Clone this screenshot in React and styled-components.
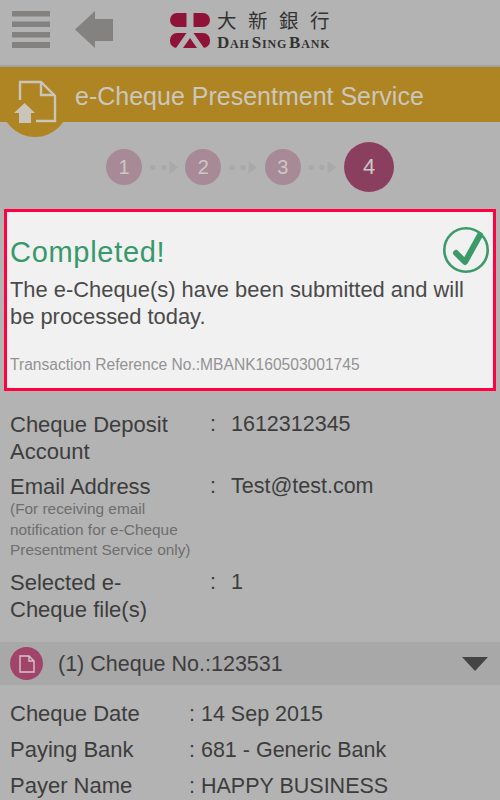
import React from 'react';
import styled, { createGlobalStyle } from 'styled-components';

const GlobalStyle = createGlobalStyle`
  html, body {
    margin: 0;
    padding: 0;
    background: #b3b3b3;
    font-family: "Liberation Sans", Arial, sans-serif;
  }
`;

const details = [
  { label: 'Cheque Date', value: '14 Sep 2015' },
  { label: 'Paying Bank', value: '681 - Generic Bank' },
  { label: 'Payer Name', value: 'HAPPY BUSINESS' },
];

const App = () => (
  <Page>
    <GlobalStyle />
    <Header>
      <IconButton aria-label="menu">
        <svg width="38" height="37" viewBox="0 0 38 37">
          <path d="M0 0h38v5.5H0zM0 10.5h38V16H0zM0 21h38v5.5H0zM0 31h38v6H0z" fill="#848181" />
        </svg>
      </IconButton>
      <BackIcon width="38" height="37" viewBox="0 0 38 37">
        <path d="M0 18.5 20 0v8h18v22H20v7z" fill="#848181" />
      </BackIcon>
      <Logo>
        <LogoMark width="40" height="35" viewBox="0 0 40 35">
          <rect x="0" y="0" width="40" height="14" rx="7" fill="#8f1238" />
          <rect x="0" y="20" width="40" height="15" rx="7" fill="#8f1238" />
          <path d="M16.5 0H23.5V20L34 35H27L20 25 13 35H6L16.5 20z" fill="#b3b3b3" />
        </LogoMark>
        <LogoText>
          <LogoChinese>大新銀行</LogoChinese>
          <LogoLatin>Dah Sing Bank</LogoLatin>
        </LogoText>
      </Logo>
    </Header>

    <TitleBar>
      <TitleBadge>
        <svg width="44" height="44" viewBox="0 0 44 44">
          <path d="M6 20V2h21l14 14v25H22" fill="none" stroke="#c9c5bb" strokeWidth="2.4" />
          <path d="M27 2v13h14" fill="none" stroke="#c9c5bb" strokeWidth="2.4" />
          <path d="M0 33 10.5 23 21 33h-4v10H5V33z" fill="#c9c5bb" />
        </svg>
      </TitleBadge>
      <Title>e-Cheque Presentment Service</Title>
    </TitleBar>

    <Steps>
      {[1, 2, 3, 4].map((n) => (
        <React.Fragment key={n}>
          <Step $active={n === 4}>{n}</Step>
          {n < 4 && (
            <svg width="28" height="13" viewBox="0 0 28 13">
              <circle cx="3" cy="6.5" r="2.7" fill="#a9a9a9" />
              <circle cx="14" cy="6.5" r="2.7" fill="#a9a9a9" />
              <path d="M19.5 0l8.5 6.5-8.5 6.5z" fill="#a9a9a9" />
            </svg>
          )}
        </React.Fragment>
      ))}
    </Steps>

    <ResultCard>
      <ResultTop>
        <Completed>Completed!</Completed>
        <svg width="48" height="48" viewBox="0 0 48 48">
          <circle cx="24" cy="24" r="21.7" fill="none" stroke="#3c9a68" strokeWidth="2.6" />
          <path d="M14 27l9 9L38 9" fill="none" stroke="#3c9a68" strokeWidth="6" strokeLinecap="round" strokeLinejoin="round" />
        </svg>
      </ResultTop>
      <ResultMessage>The e-Cheque(s) have been submitted and will be processed today.</ResultMessage>
      <Reference>Transaction Reference No.:MBANK160503001745</Reference>
    </ResultCard>

    <Summary>
      <SummaryRow>
        <SummaryLabel>Cheque Deposit Account</SummaryLabel>
        <Colon>:</Colon>
        <SummaryValue>1612312345</SummaryValue>
      </SummaryRow>
      <SummaryRow>
        <div>
          <SummaryLabel>Email Address</SummaryLabel>
          <Hint>(For receiving email notification for e-Cheque Presentment Service only)</Hint>
        </div>
        <Colon>:</Colon>
        <SummaryValue>Test@test.com</SummaryValue>
      </SummaryRow>
      <SummaryRow>
        <SummaryLabel>Selected e-Cheque file(s)</SummaryLabel>
        <Colon>:</Colon>
        <SummaryValue>1</SummaryValue>
      </SummaryRow>
    </Summary>

    <ChequeBar>
      <DocBadge>
        <svg width="16" height="18" viewBox="0 0 16 18">
          <path d="M1 1h9l5 5v11H1zM10 1v5h5" fill="none" stroke="#d3c6cb" strokeWidth="1.4" />
        </svg>
      </DocBadge>
      <ChequeTitle>(1) Cheque No.:123531</ChequeTitle>
      <Caret />
    </ChequeBar>

    <DetailList>
      {details.map((d) => (
        <DetailRow key={d.label}>
          <DetailLabel>{d.label}</DetailLabel>
          <span>: {d.value}</span>
        </DetailRow>
      ))}
    </DetailList>
  </Page>
);

const Page = styled.div`
  width: 500px;
  height: 800px;
  overflow: hidden;
  background: #b3b3b3;
  color: #3d3d3d;
`;

const Header = styled.div`
  height: 67px;
  box-sizing: border-box;
  display: flex;
  align-items: center;
  padding: 0 0 6px 12px;
  border-bottom: 2px solid #a2a2a2;
`;

const IconButton = styled.div`
  display: flex;
  width: 40px;
`;

const BackIcon = styled.svg`
  margin-left: 23px;
`;

const Logo = styled.div`
  display: flex;
  align-items: center;
  gap: 7px;
  margin-left: 57px;
`;

const LogoMark = styled.svg`
  margin-top: 2px;
`;

const LogoText = styled.div`
  display: flex;
  flex-direction: column;
  color: #333;
`;

const LogoChinese = styled.div`
  font-family: "Liberation Serif", "Noto Sans CJK TC", serif;
  font-size: 19.5px;
  line-height: 24px;
  height: 26px;
  letter-spacing: 11.5px;
  white-space: nowrap;
`;

const LogoLatin = styled.div`
  font-family: "Liberation Serif", serif;
  font-size: 17px;
  font-weight: 700;
  font-variant: small-caps;
  letter-spacing: 0.8px;
  line-height: 14px;
  white-space: nowrap;
  word-spacing: -3px;
`;

const TitleBar = styled.div`
  height: 55px;
  display: flex;
  align-items: center;
  background: #ae8522;
  position: relative;
`;

const TitleBadge = styled.div`
  position: absolute;
  left: 1px;
  top: 0;
  width: 68px;
  height: 70px;
  border-radius: 0 0 34px 34px;
  background: #ae8522;
  padding: 13px 0 0 13px;
  box-sizing: border-box;
`;

const Title = styled.div`
  margin-left: 75px;
  padding-top: 3px;
  font-size: 25px;
  color: #cbc7bd;
`;

const Steps = styled.div`
  height: 87px;
  display: flex;
  align-items: center;
  padding: 3px 0 0 106px;
  gap: 7.7px;
  box-sizing: border-box;
`;

const Step = styled.div`
  width: ${(p) => (p.$active ? 50 : 36)}px;
  height: ${(p) => (p.$active ? 50 : 36)}px;
  border-radius: 50%;
  display: flex;
  align-items: center;
  justify-content: center;
  font-size: ${(p) => (p.$active ? 22 : 20)}px;
  background: ${(p) => (p.$active ? '#8b3f5e' : '#a88a97')};
  color: #cdc6c9;
`;

const ResultCard = styled.div`
  margin: 0 4px;
  height: 182px;
  box-sizing: border-box;
  border: 3px solid #ff0040;
  background: #f1f1f1;
  padding: 13px 3px 0;
`;

const ResultTop = styled.div`
  display: flex;
  align-items: center;
  justify-content: space-between;
  height: 50px;
`;

const Completed = styled.div`
  font-size: 29px;
  letter-spacing: 0.7px;
  color: #37996a;
  margin-top: 4px;
`;

const ResultMessage = styled.div`
  font-size: 21.9px;
  line-height: 27px;
  color: #4a4a4a;
  margin-top: 1px;
  max-width: 465px;
`;

const Reference = styled.div`
  font-size: 15.6px;
  color: #939393;
  margin-top: 26px;
`;

const Summary = styled.div`
  padding: 20px 10px 0;
  line-height: 27px;
`;

const SummaryRow = styled.div`
  display: grid;
  grid-template-columns: 200px 21px 1fr;
  margin-bottom: 8px;
`;

const SummaryLabel = styled.div`
  font-size: 22px;
  max-width: 172px;
`;

const SummaryValue = styled.span`
  font-size: 21.5px;
`;

const Colon = styled.span`
  font-size: 21.5px;
`;

const Hint = styled.div`
  font-size: 15.4px;
  line-height: 20.5px;
  color: #6e6e6e;
  margin-top: -1px;
  padding-bottom: 0.5px;
`;

const ChequeBar = styled.div`
  height: 43px;
  margin-top: 19px;
  display: flex;
  align-items: center;
  background: #a8a8a8;
  padding: 0 12px 0 10px;
`;

const DocBadge = styled.div`
  width: 33px;
  height: 33px;
  border-radius: 50%;
  background: #a2436a;
  display: flex;
  align-items: center;
  justify-content: center;
`;

const ChequeTitle = styled.div`
  flex: 1;
  margin-left: 15px;
  padding-top: 2px;
  font-size: 21.5px;
`;

const Caret = styled.div`
  width: 0;
  height: 0;
  border-left: 13px solid transparent;
  border-right: 13px solid transparent;
  border-top: 14px solid #444;
`;

const DetailList = styled.div`
  padding: 11px 10px 0;
  font-size: 21.5px;
  line-height: 36px;
`;

const DetailRow = styled.div`
  display: grid;
  grid-template-columns: 179px 1fr;
`;

const DetailLabel = styled.span`
  font-size: 22px;
`;

export default App;
